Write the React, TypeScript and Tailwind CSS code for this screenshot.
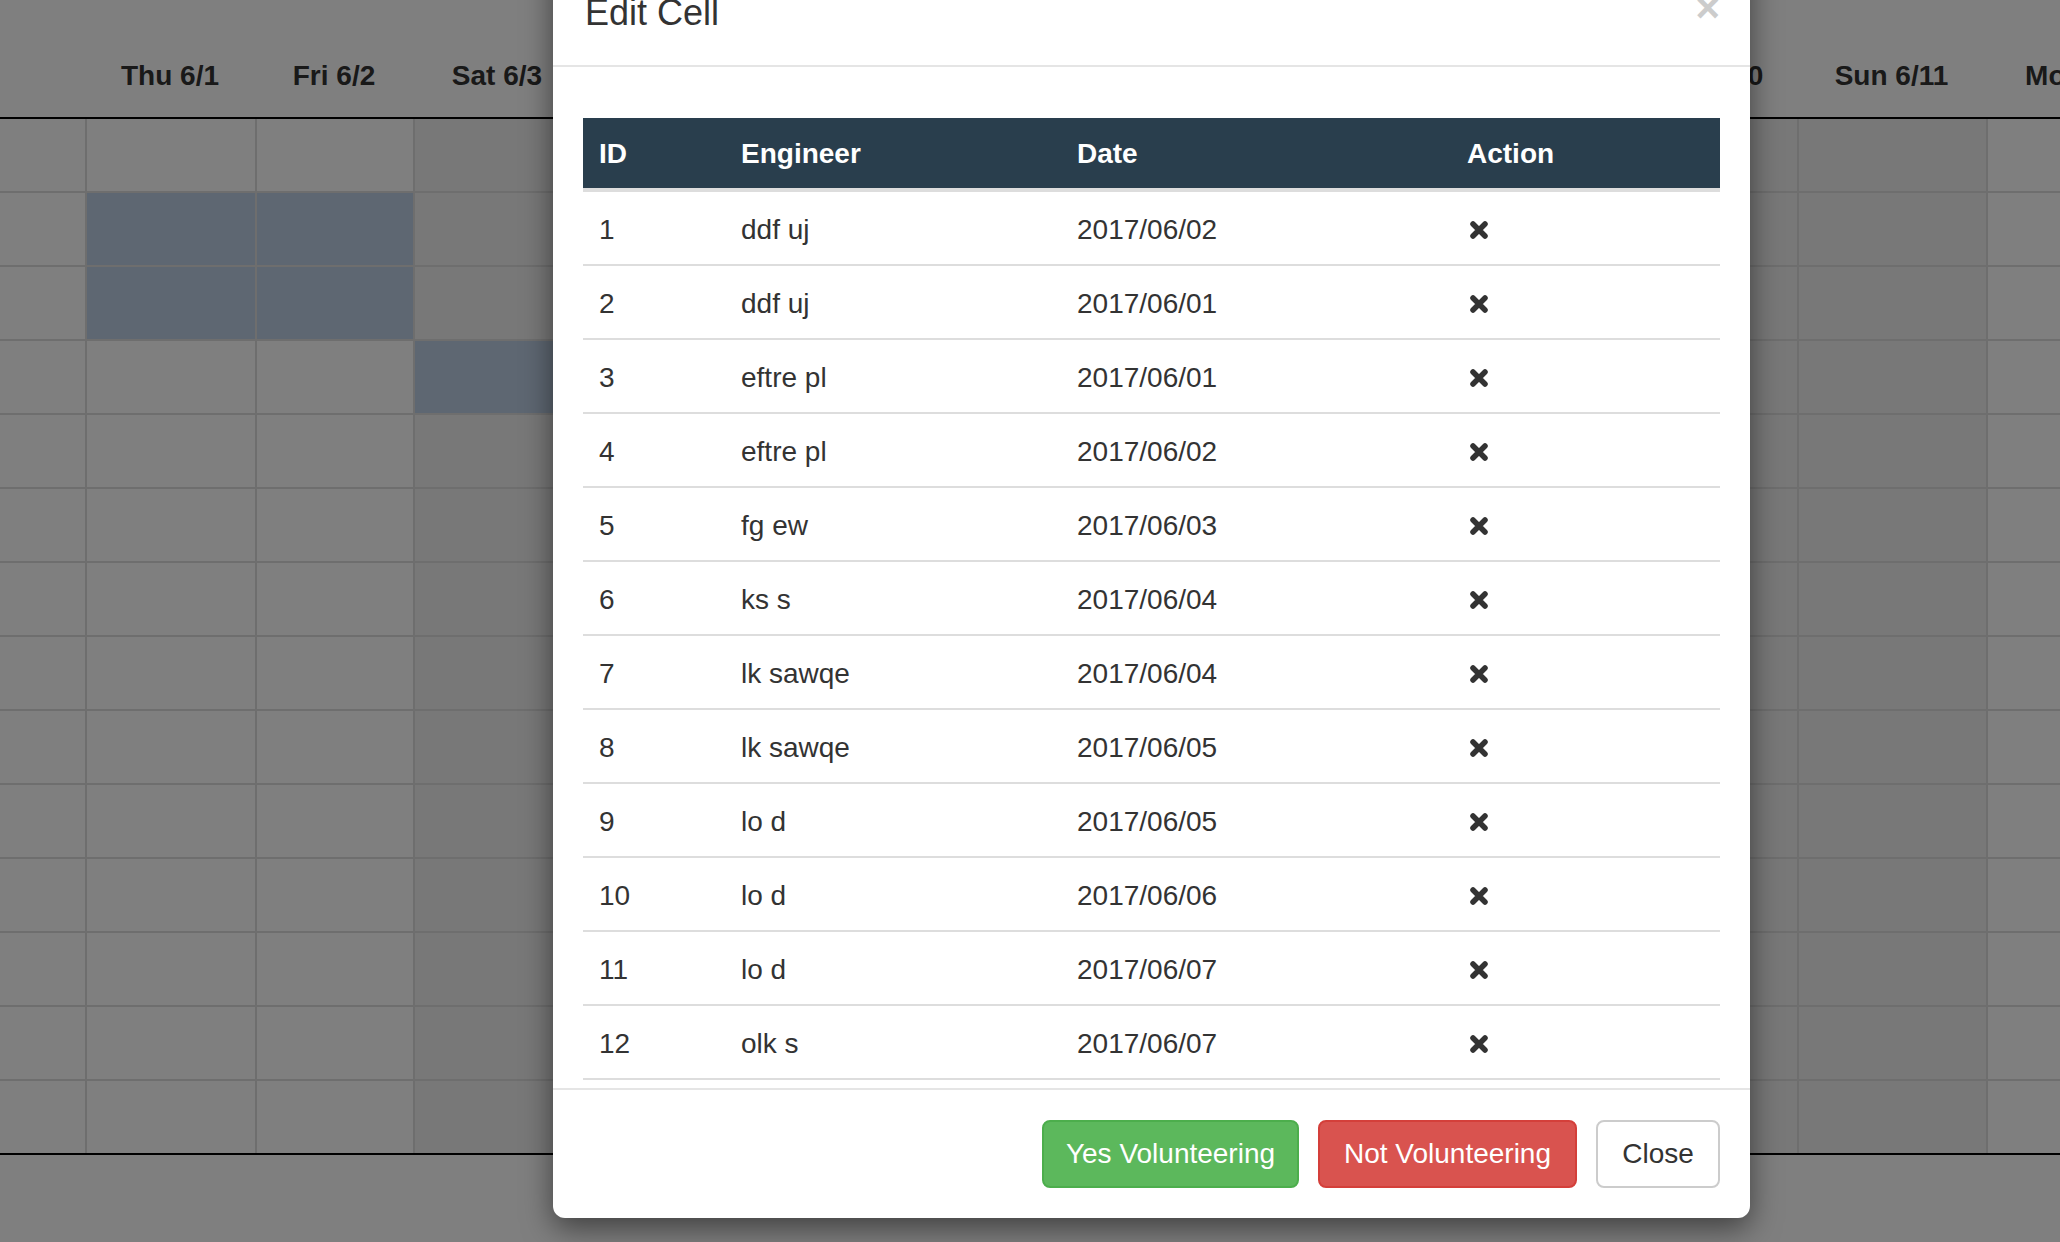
const DAYS = [
  '',
  'Thu 6/1',
  'Fri 6/2',
  'Sat 6/3',
  'Sun 6/4',
  'Mon 6/5',
  'Tue 6/6',
  'Wed 6/7',
  'Thu 6/8',
  'Fri 6/9',
  'Sat 6/10',
  'Sun 6/11',
  'Mon 6/12',
];

const WEEKEND = [3, 4, 10, 11];

// row index -> highlighted day columns
const HIGHLIGHTS: Record<number, number[]> = {
  1: [1, 2],
  2: [1, 2],
  3: [3],
};

const ROW_COUNT = 14;

const ENTRIES = [
  { id: 1, engineer: 'ddf uj', date: '2017/06/02' },
  { id: 2, engineer: 'ddf uj', date: '2017/06/01' },
  { id: 3, engineer: 'eftre pl', date: '2017/06/01' },
  { id: 4, engineer: 'eftre pl', date: '2017/06/02' },
  { id: 5, engineer: 'fg ew', date: '2017/06/03' },
  { id: 6, engineer: 'ks s', date: '2017/06/04' },
  { id: 7, engineer: 'lk sawqe', date: '2017/06/04' },
  { id: 8, engineer: 'lk sawqe', date: '2017/06/05' },
  { id: 9, engineer: 'lo d', date: '2017/06/05' },
  { id: 10, engineer: 'lo d', date: '2017/06/06' },
  { id: 11, engineer: 'lo d', date: '2017/06/07' },
  { id: 12, engineer: 'olk s', date: '2017/06/07' },
];

const gridCols =
  'grid grid-cols-[85px_170px_158px_168px_174px_174px_174px_174px_174px_173px_173px_189px_198px]';

const RemoveIcon = () => (
  <svg width="20" height="20" viewBox="0 0 20 20" aria-hidden="true">
    <path
      d="M4 4 L16 16 M16 4 L4 16"
      stroke="#333"
      strokeWidth="5.5"
      strokeLinecap="round"
    />
  </svg>
);

const Calendar = () => (
  <div className="w-max">
    <div className={`${gridCols} h-[119px] border-b-2 border-black`}>
      {DAYS.map((day, i) => (
        <div
          key={i}
          className="flex items-end justify-center pb-[21px] text-[28px] leading-[40px] font-bold whitespace-nowrap text-[#333]"
        >
          {day}
        </div>
      ))}
    </div>
    {Array.from({ length: ROW_COUNT }).map((_, r) => (
      <div
        key={r}
        className={`${gridCols} h-[74px] border-b-2 ${
          r === ROW_COUNT - 1 ? 'border-black' : 'border-[#dcdcdc]'
        }`}
      >
        {DAYS.map((_, c) => {
          const lit = HIGHLIGHTS[r]?.includes(c);
          return (
            <div
              key={c}
              className={`${c > 0 ? 'border-l-2 border-[#dcdcdc]' : ''} ${
                lit
                  ? 'bg-[#bccfe5]'
                  : WEEKEND.includes(c)
                    ? 'bg-[#f0f0f0]'
                    : 'bg-white'
              }`}
            />
          );
        })}
      </div>
    ))}
  </div>
);

const tableCols = 'grid grid-cols-[142px_336px_390px_269px]';

const EditCellModal = () => (
  <div className="absolute top-[-46px] left-[553px] w-[1197px] rounded-[12px] bg-white shadow-[0_10px_30px_rgba(0,0,0,0.5)]">
    <div className="relative border-b-2 border-[#e5e5e5] px-[30px] pt-[33px] pb-[27px]">
      <button
        type="button"
        className="absolute top-[33px] right-[30px] text-[42px] leading-none font-bold text-[#cccccc]"
      >
        ×
      </button>
      <h4 className="pl-[2px] text-[36px] leading-[51px] text-[#333]">Edit Cell</h4>
    </div>

    <div className="h-[1021px] overflow-hidden px-[30px] pt-[51px]">
      <div className={`${tableCols} h-[74px] border-b-4 border-[#dddddd] bg-[#293e4d]`}>
        {['ID', 'Engineer', 'Date', 'Action'].map((h) => (
          <div
            key={h}
            className="flex items-center pt-[2px] pl-[16px] text-[28px] font-bold text-white"
          >
            {h}
          </div>
        ))}
      </div>
      {ENTRIES.map((e) => (
        <div
          key={e.id}
          className={`${tableCols} h-[74px] border-b-2 border-[#dddddd] text-[28px] text-[#333]`}
        >
          <div className="flex items-center pt-[4px] pl-[16px]">{e.id}</div>
          <div className="flex items-center pt-[4px] pl-[16px]">{e.engineer}</div>
          <div className="flex items-center pt-[4px] pl-[16px]">{e.date}</div>
          <div className="flex items-center pt-[4px] pl-[18px]">
            <RemoveIcon />
          </div>
        </div>
      ))}
    </div>

    <div className="flex justify-end gap-[19px] border-t-2 border-[#e5e5e5] p-[30px]">
      <button
        type="button"
        className="h-[68px] w-[257px] rounded-[8px] border-2 border-[#4cae4c] bg-[#5cb85c] text-[28px] whitespace-nowrap text-white"
      >
        Yes Volunteering
      </button>
      <button
        type="button"
        className="h-[68px] w-[259px] rounded-[8px] border-2 border-[#d43f3a] bg-[#d9534f] text-[28px] whitespace-nowrap text-white"
      >
        Not Volunteering
      </button>
      <button
        type="button"
        className="h-[68px] w-[124px] rounded-[8px] border-2 border-[#cccccc] bg-white text-[28px] text-[#333]"
      >
        Close
      </button>
    </div>
  </div>
);

export default function App() {
  return (
    <div className="relative h-[1242px] w-[2060px] overflow-hidden bg-white font-['Liberation_Sans',Arial,sans-serif]">
      <Calendar />
      <div className="absolute inset-0 bg-black/50" />
      <EditCellModal />
    </div>
  );
}
